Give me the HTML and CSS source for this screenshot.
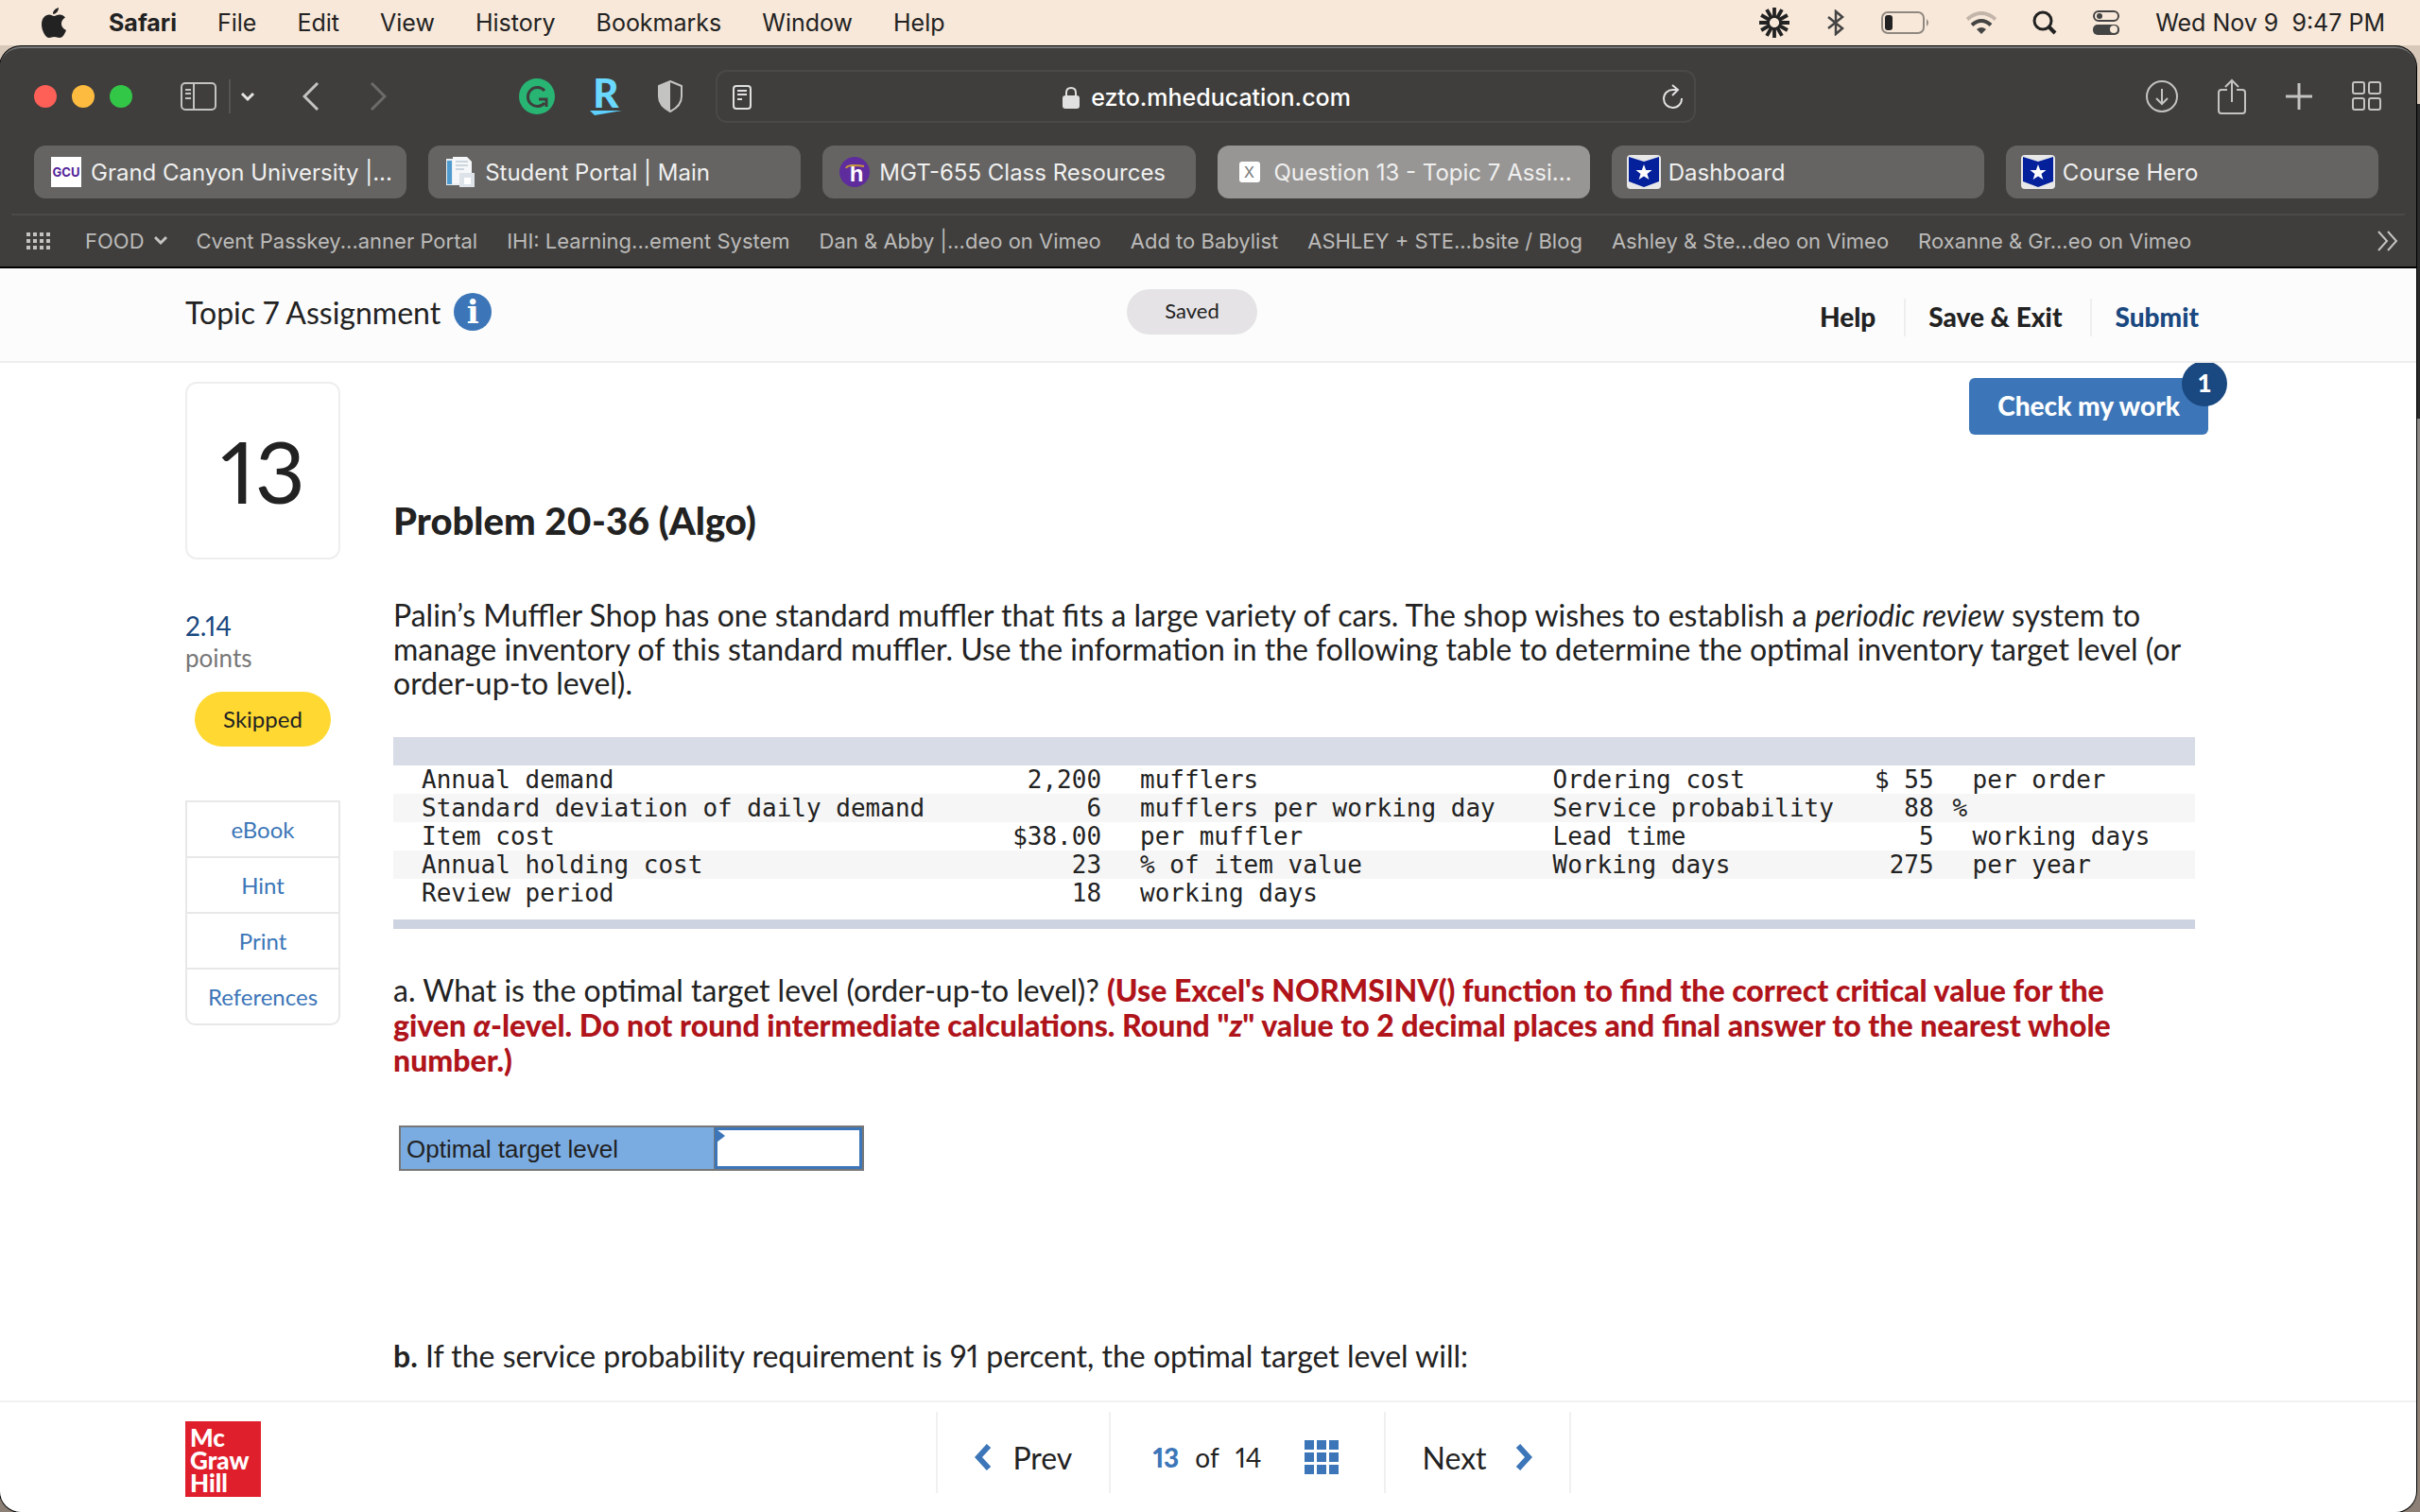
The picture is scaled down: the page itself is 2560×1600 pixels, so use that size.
FILE: index.html
```html
<!DOCTYPE html>
<html lang="en">
<head>
  <meta charset="UTF-8">
  <title>Question 13 - Topic 7 Assignment</title>
  <link rel="stylesheet" href="styles.css">
</head>
<body>
  <header class="menubar">
    <svg class="apple" width="28" height="32" viewBox="0 0 28 32"><path d="M19 0c0 4-3 7-6 7 0-4 3-6 6-7zM14 9c2 0 3-1.500 6-1.500 3 0 5 1.500 6 3-6 3.500-5 11 1 13.500-2 5-4 8-7 8-2 0-3-1-5.500-1S11 32 9 32C5 32 1 24 1 18 1 11 5 7.500 9 7.500c2 0 4 1.500 5 1.500z" fill="#222"/></svg>
    <nav class="menus">
      <b>Safari</b><span>File</span><span>Edit</span><span>View</span><span>History</span><span>Bookmarks</span><span>Window</span><span>Help</span>
    </nav>
    <div class="status">
      <svg width="34" height="34" viewBox="-17 -17 34 34"><path d="M0-16V-5M0 5V16M-16 0H-5M5 0H16M4.300 2.500L13.900 8M-4.300 2.500L-13.900 8M4.300-2.500L13.900-8M-4.300-2.500L-13.900-8M2.500 4.300L8 13.900M-2.500 4.300L-8 13.900M2.500-4.300L8-13.900M-2.500-4.300L-8-13.900" stroke="#222" stroke-width="3.800"/></svg>
      <svg width="20" height="28" viewBox="0 0 20 28"><path d="M2 8l15 12-7 6V2l7 6L2 20" fill="none" stroke="#444" stroke-width="2.500"/></svg>
      <svg width="52" height="26" viewBox="0 0 52 26"><rect x="1" y="2" width="44" height="22" rx="6" fill="none" stroke="#8f8880" stroke-width="2"/><rect x="4" y="5" width="8" height="16" rx="3" fill="#222"/><path d="M48 9q4 4 0 8z" fill="#8f8880"/></svg>
      <svg width="32" height="24" viewBox="0 0 32 24"><g fill="none" stroke-width="4"><path d="M1 8.500q15-13 30 0" stroke="#c3b5aa"/><path d="M6 14.500q10-9 20 0" stroke="#444"/></g><path d="M11 19q5-4 10 0l-5 5z" fill="#444"/></svg>
      <svg width="26" height="26" viewBox="0 0 26 26"><g fill="none" stroke="#222" stroke-width="3"><circle cx="11" cy="11" r="9"/><path d="M17 17l7 7" stroke-width="4"/></g></svg>
      <svg width="28" height="28" viewBox="0 0 28 28"><rect x="1" y="2" width="26" height="10" rx="5" fill="none" stroke="#444" stroke-width="2"/><circle cx="7" cy="7" r="3" fill="#444"/><rect y="16" width="28" height="11" rx="5" fill="#444"/><circle cx="22" cy="21" r="4" fill="#f8e8d9"/></svg>
      <time>Wed Nov 9&nbsp; 9:47 PM</time>
    </div>
  </header>

  <div class="window">
    <div class="toolbar">
      <div class="lights"><i class="red"></i><i class="yellow"></i><i class="green"></i></div>
      <button class="sidebar-btn" aria-label="Sidebar"><svg width="38" height="30" viewBox="0 0 38 30"><g fill="none" stroke="#c3c3c2" stroke-width="2"><rect x="1" y="1" width="36" height="28" rx="4"/><path d="M14 1v28M5 8h6M5 12h6M5 17h6"/></g></svg></button>
      <button class="drop-btn" aria-label="Tab groups"><svg width="16" height="12" viewBox="0 0 16 12"><path d="M2 3l6 6 6-6" fill="none" stroke="#e5e5e5" stroke-width="3"/></svg></button>
      <button class="back-btn" aria-label="Back"><svg width="18" height="30" viewBox="0 0 18 30"><path d="M16 1L2 15l14 14" fill="none" stroke="#c3c3c2" stroke-width="3"/></svg></button>
      <button class="fwd-btn" aria-label="Forward"><svg width="18" height="30" viewBox="0 0 18 30"><path d="M2 1l14 14L2 29" fill="none" stroke="#6b6b69" stroke-width="3"/></svg></button>
      <div class="extensions">
        <svg width="38" height="38" viewBox="0 0 38 38"><circle cx="19" cy="19" r="19" fill="#28b574"/><path d="M27 13a10 10 0 1 0 0 13M21 22h8v8" fill="none" stroke="#3f3e3c" stroke-width="3"/></svg>
        <span class="rakuten">R<svg width="34" height="5" viewBox="0 0 34 5"><path d="M0 0h34L5 5z" fill="#5ed0ff"/></svg></span>
        <svg width="28" height="34" viewBox="0 0 28 34"><path d="M14 1l12 5v11q0 10-12 16Q2 27 2 17V6z" fill="none" stroke="#c3c3c2" stroke-width="2"/><path d="M14 1v32Q2 27 2 17V6z" fill="#c3c3c2"/></svg>
      </div>
      <div class="address">
        <svg width="20" height="26" viewBox="0 0 20 26"><g fill="none" stroke="#e0e0e0" stroke-width="2"><rect x="1" y="1" width="18" height="24" rx="3"/><path d="M5 6h10M5 10h10M5 15h5"/></g></svg>
        <span class="url"><svg width="18" height="24" viewBox="0 0 18 24"><rect y="10" width="18" height="14" rx="3" fill="#e0e0e0"/><path d="M4 11V7q0-5 5-5t5 5v4" fill="none" stroke="#e0e0e0" stroke-width="2"/></svg>ezto.mheducation.com</span>
        <svg width="24" height="28" viewBox="0 0 24 28"><path d="M21 15a9.500 9.500 0 1 1-9-9h4M11 1l6 5-6 6" fill="none" stroke="#e0e0e0" stroke-width="2"/></svg>
      </div>
      <div class="actions">
        <svg width="34" height="34" viewBox="0 0 34 34"><g fill="none" stroke="#c3c3c2" stroke-width="2"><circle cx="17" cy="17" r="16"/><path d="M17 9v16M11 19l6 6 6-6"/></g></svg>
        <svg width="30" height="38" viewBox="0 0 30 38"><g fill="none" stroke="#c3c3c2" stroke-width="2"><path d="M10 12H4q-3 0-3 3v19q0 3 3 3h22q3 0 3-3V15q0-3-3-3h-6M15 25V2M8 9l7-7 7 7"/></g></svg>
        <svg width="28" height="28" viewBox="0 0 28 28"><path d="M14 0v28M0 14h28" stroke="#c3c3c2" stroke-width="3"/></svg>
        <svg width="32" height="32" viewBox="0 0 32 32"><g fill="none" stroke="#c3c3c2" stroke-width="2"><rect x="1" y="1" width="12" height="12" rx="2"/><rect x="18" y="1" width="12" height="12" rx="2"/><rect x="1" y="18" width="12" height="12" rx="2"/><rect x="18" y="18" width="12" height="12" rx="2"/></g></svg>
      </div>
    </div>

    <div class="tabs">
      <div class="tab"><span class="fav gcu">GCU</span>Grand Canyon University |...</div>
      <div class="tab"><svg class="fav" width="32" height="32" viewBox="0 0 32 32"><path d="M1 2h16v28H1z" fill="#e9eef2"/><path d="M2 4h5v25H2z" fill="#4f9bd0"/><path d="M8 0h15l5 5v23H8z" fill="#f5f7f9"/><path d="M11 5h13M11 9h13M11 13h9" stroke="#ccd6de" stroke-width="2"/><path d="M15 17h16v15H15z" fill="#dde3e9"/><path d="M20 22h7v7h-7z" fill="#fff"/></svg>Student Portal | Main</div>
      <div class="tab"><svg class="fav" width="32" height="32" viewBox="0 0 32 32"><circle cx="16" cy="16" r="16" fill="#5f2c9d"/><text class="halo" x="18" y="26" text-anchor="middle">h</text><path d="M7 12q1-3 8-3t11 1" fill="none" stroke="#c9973a" stroke-width="2"/></svg>MGT-655 Class Resources</div>
      <div class="tab active"><span class="fav cross"><i>X</i></span>Question 13 - Topic 7 Assi...</div>
      <div class="tab"><svg class="fav hero" width="36" height="36" viewBox="0 0 36 36"><rect width="36" height="36" rx="4" fill="#e8e8e8"/><path d="M2 2l16 5 16-5v26l-16 6-16-6z" fill="#04209b"/><path d="M18 10l2.200 6h6.300l-5 4 1.900 6-5.400-3.600-5.400 3.600 1.900-6-5-4h6.300z" fill="#fff"/></svg>Dashboard</div>
      <div class="tab"><svg class="fav hero" width="36" height="36" viewBox="0 0 36 36"><rect width="36" height="36" rx="4" fill="#e8e8e8"/><path d="M2 2l16 5 16-5v26l-16 6-16-6z" fill="#04209b"/><path d="M18 10l2.200 6h6.300l-5 4 1.900 6-5.400-3.600-5.400 3.600 1.900-6-5-4h6.300z" fill="#fff"/></svg>Course Hero</div>
    </div>

    <nav class="bookmarks">
      <svg width="26" height="18" viewBox="0 0 26 18"><path d="M0 2h26M0 9h26M0 16h26" stroke="#c3c3c2" stroke-width="4" stroke-dasharray="4 3"/></svg>
      <span class="food">FOOD <svg width="14" height="12" viewBox="0 0 14 12"><path d="M1 2l6 6 6-6" fill="none" stroke="#c3c3c2" stroke-width="3"/></svg></span>
      <span>Cvent Passkey...anner Portal</span>
      <span>IHI: Learning...ement System</span>
      <span>Dan &amp; Abby |...deo on Vimeo</span>
      <span>Add to Babylist</span>
      <span>ASHLEY + STE...bsite / Blog</span>
      <span>Ashley &amp; Ste...deo on Vimeo</span>
      <span>Roxanne &amp; Gr...eo on Vimeo</span>
      <svg class="more" width="24" height="22" viewBox="0 0 24 22"><path d="M2 1l9 10-9 10M12 1l9 10-9 10" fill="none" stroke="#c3c3c2" stroke-width="2"/></svg>
    </nav>

    <div class="page">
      <div class="page-header">
        <div class="container header-row">
          <div class="title">Topic 7 Assignment <button class="info" aria-label="Information">i</button></div>
          <div class="saved">Saved</div>
          <nav class="header-links"><a href="#">Help</a><a href="#">Save &amp; Exit</a><a class="submit" href="#">Submit</a></nav>
        </div>
      </div>

      <div class="container content">
        <aside class="side">
          <div class="number">13</div>
          <div class="score">2.14</div>
          <div class="points">points</div>
          <div class="skipped">Skipped</div>
          <nav class="side-links">
            <a href="#">eBook</a>
            <a href="#">Hint</a>
            <a href="#">Print</a>
            <a href="#">References</a>
          </nav>
        </aside>

        <main class="question">
          <div class="check-row">
            <button class="check">Check my work<span class="badge">1</span></button>
          </div>
          <h1>Problem 20-36 (Algo)</h1>
          <p class="intro">Palin’s Muffler Shop has one standard muffler that fits a large variety of cars. The shop wishes to establish a <em>periodic review</em> system to<br>manage inventory of this standard muffler. Use the information in the following table to determine the optimal inventory target level (or<br>order-up-to level).</p>

          <table class="data">
            <colgroup><col class="c-item"><col class="c-value"><col class="c-unit"><col class="c-item2"><col class="c-value2"><col></colgroup>
            <thead><tr><th colspan="6"></th></tr></thead>
            <tbody>
              <tr><td>Annual demand</td><td class="num">2,200</td><td>mufflers</td><td>Ordering cost</td><td class="num">$ 55</td><td>per order</td></tr>
              <tr><td>Standard deviation of daily demand</td><td class="num">6</td><td>mufflers per working day</td><td>Service probability</td><td class="num">88</td><td class="percent">%</td></tr>
              <tr><td>Item cost</td><td class="num">$38.00</td><td>per muffler</td><td>Lead time</td><td class="num">5</td><td>working days</td></tr>
              <tr><td>Annual holding cost</td><td class="num">23</td><td>% of item value</td><td>Working days</td><td class="num">275</td><td>per year</td></tr>
              <tr><td>Review period</td><td class="num">18</td><td>working days</td><td></td><td></td><td></td></tr>
            </tbody>
          </table>

          <p class="part-a">a. What is the optimal target level (order-up-to level)? <strong>(Use Excel's NORMSINV() function to find the correct critical value for the<br>given <em>α</em>-level. Do not round intermediate calculations. Round "<em>z</em>" value to 2 decimal places and final answer to the nearest whole<br>number.)</strong></p>

          <div class="answer">
            <label for="target">Optimal target level</label>
            <div class="answer-cell"><input id="target" type="text"></div>
          </div>

          <p class="part-b"><b>b.</b> If the service probability requirement is 91 percent, the optimal target level will:</p>
        </main>
      </div>

      <footer class="page-footer">
        <div class="container footer-row">
          <div class="logo">Mc<br>Graw<br>Hill</div>
          <nav class="pager">
            <a class="prev" href="#"><svg width="18" height="28" viewBox="0 0 18 28"><path d="M15 2L4 14l11 12" fill="none" stroke="#3c76b8" stroke-width="6"/></svg>Prev</a>
            <div class="count"><b>13</b><span>of</span><span>14</span><svg width="36" height="36" viewBox="0 0 36 36"><path d="M0 5h36M0 18h36M0 31h36" stroke="#3c76b8" stroke-width="10" stroke-dasharray="10 3"/></svg></div>
            <a class="next" href="#">Next<svg width="18" height="28" viewBox="0 0 18 28"><path d="M3 2l11 12L3 26" fill="none" stroke="#3c76b8" stroke-width="6"/></svg></a>
          </nav>
        </div>
      </footer>
    </div>
  </div>
</body>
</html>
```

FILE: styles.css
```css
* {
  box-sizing: border-box;
}
body {
  margin: 0;
  height: 100vh;
  display: flex;
  flex-direction: column;
  overflow: hidden;
  background: linear-gradient(#d8c8ba 110px, #2a2a2a 110px, #2a2a2a 443px, #8d8a88 443px, #8d8076);
  font-family: Inter, "Liberation Sans", sans-serif;
}
svg {
  flex: none;
}
button {
  border: 0;
  padding: 0;
  background: none;
  font-family: inherit;
  display: flex;
}
a {
  color: inherit;
  text-decoration: none;
}

/* menu bar */
.menubar {
  height: 48px;
  flex: none;
  display: flex;
  align-items: center;
  padding: 0 37px 0 43px;
  background: #f8e8d9;
  color: #222;
  font-size: 25px;
}
.menus {
  display: flex;
  gap: 43px;
  margin-left: 44px;
}
.status {
  display: flex;
  align-items: center;
  gap: 38px;
  margin-left: auto;
}

/* browser window */
.window {
  flex: 1;
  min-height: 0;
  display: flex;
  flex-direction: column;
  margin: 1px 4px 0 0;
  border-top: 2px solid #777;
  border-radius: 22px;
  overflow: hidden;
  background: #3f3e3c;
  box-shadow: 0 0 0 1px #000;
}
.toolbar {
  height: 101px;
  flex: none;
  display: flex;
  align-items: center;
  padding: 0 36px;
}
.lights {
  display: flex;
  gap: 16px;
}
.lights i {
  width: 24px;
  height: 24px;
  border-radius: 50%;
}
.red {
  background: #fe5f57;
}
.yellow {
  background: #fdbc40;
}
.green {
  background: #33c748;
}
.sidebar-btn {
  margin-left: 51px;
}
.drop-btn {
  height: 36px;
  align-items: center;
  margin-left: 13px;
  padding-left: 10px;
  border-left: 2px solid #555452;
}
.back-btn {
  margin-left: 50px;
}
.fwd-btn {
  margin-left: 53px;
}
.extensions {
  display: flex;
  align-items: center;
  gap: 37px;
  margin-left: 140px;
}
.rakuten {
  width: 34px;
  display: flex;
  flex-direction: column;
  align-items: center;
  gap: 3px;
  color: #6bd8ff;
  font: 900 42px/32px Lato, sans-serif;
}
.address {
  flex: 1;
  height: 56px;
  display: flex;
  align-items: center;
  justify-content: space-between;
  margin-left: 34px;
  padding: 2px 10px 0 16px;
  border: 2px solid #4a4947;
  border-radius: 12px;
  color: #fff;
  font-size: 25px;
  font-weight: 500;
}
.url {
  display: flex;
  align-items: center;
  gap: 12px;
}
.actions {
  display: flex;
  align-items: center;
  gap: 42px;
  margin-left: 476px;
}
.tabs {
  display: flex;
  gap: 23px;
  padding: 2px 40px 16px 36px;
}
.tab {
  flex: 1;
  min-width: 0;
  height: 56px;
  display: flex;
  align-items: center;
  gap: 10px;
  padding-left: 18px;
  border-radius: 12px;
  background: #656462;
  color: #f0f0f0;
  font-size: 24px;
  white-space: nowrap;
}
.active {
  background: #989694;
}
.fav {
  width: 32px;
  height: 32px;
  flex: none;
}
.hero {
  width: 36px;
  height: 36px;
  margin: 0 -2px;
}
.gcu {
  background: #fff;
  color: #522398;
  text-align: center;
  font: bold 13px/32px Inter, sans-serif;
}
.halo {
  fill: #fff;
  font: bold 24px "Liberation Sans", sans-serif;
}
.cross {
  display: grid;
  place-items: center;
}
.cross i {
  width: 22px;
  height: 22px;
  border-radius: 3px;
  background: #fff;
  color: #777;
  text-align: center;
  font: 16px/22px Inter, sans-serif;
}
.bookmarks {
  height: 56px;
  flex: none;
  display: flex;
  align-items: center;
  gap: 31px;
  margin: 0 12px;
  padding: 0 6px 0 16px;
  border-top: 2px solid #4b4a48;
  color: #bcbbba;
  font-size: 22px;
  white-space: nowrap;
}
.food {
  display: flex;
  align-items: center;
  gap: 10px;
  margin-left: 5px;
}
.more {
  margin-left: auto;
}

/* assignment page */
.page {
  flex: 1;
  min-height: 0;
  display: flex;
  flex-direction: column;
  border-top: 2px solid #000;
  background: #fff;
  color: #222;
  font-family: Lato, sans-serif;
  font-size: 32px;
  font-variant-numeric: proportional-nums;
}
.container {
  width: 100%;
  max-width: 2164px;
  margin: 0 auto;
}
.page-header {
  flex: none;
  border-bottom: 2px solid #eee;
  background: #fcfcfc;
}
.header-row {
  height: 98px;
  display: grid;
  grid-template-columns: 1fr auto 1fr;
  padding-right: 34px;
}
.title {
  display: flex;
  align-items: center;
  gap: 14px;
  height: 92px;
}
.info {
  width: 40px;
  height: 40px;
  justify-content: center;
  border-radius: 50%;
  background: #3c76b8;
  color: #fff;
  font: bold 34px/40px "DejaVu Serif", serif;
}
.saved {
  height: 48px;
  margin-top: 22px;
  padding: 0 40px;
  border-radius: 24px;
  background: #e5e3e6;
  font-size: 22px;
  line-height: 46px;
}
.header-links {
  display: flex;
  justify-content: flex-end;
  margin-top: 32px;
  font-size: 28px;
  font-weight: 900;
  line-height: 38px;
}
.header-links a {
  height: 40px;
  padding: 0 30px 0 24px;
}
.header-links a + a {
  border-left: 2px solid #eee;
}
.header-links .submit {
  padding-right: 0;
  color: #1a4880;
}
.content {
  flex: 1;
  min-height: 0;
  display: flex;
  gap: 56px;
  overflow: hidden;
}
.side {
  width: 164px;
  flex: none;
  padding-top: 20px;
}
.number {
  height: 188px;
  border: 2px solid #eee;
  border-radius: 12px;
  text-align: center;
  font-size: 92px;
  line-height: 184px;
}
.score {
  margin-top: 52px;
  color: #1a4880;
  font-size: 28px;
  line-height: 36px;
}
.points {
  color: #777;
  font-size: 26px;
  line-height: 32px;
}
.skipped {
  height: 58px;
  margin: 20px 10px 0;
  border-radius: 29px;
  background: #ffd932;
  text-align: center;
  font-size: 24px;
  line-height: 58px;
}
.side-links {
  margin-top: 57px;
  border: 2px solid #e8e8e8;
  border-radius: 0 0 10px 10px;
}
.side-links a {
  display: block;
  color: #3c76b8;
  text-align: center;
  font-size: 24px;
  line-height: 57px;
}
.side-links a + a {
  border-top: 2px solid #e8e8e8;
}
.question {
  flex: 1;
  min-width: 0;
  padding-right: 38px;
}
.check-row {
  display: flex;
  justify-content: flex-end;
  margin: 16px -14px 0 0;
}
.check {
  position: relative;
  height: 60px;
  padding: 0 30px;
  border-radius: 6px;
  background: #3c76b8;
  color: #fff;
  font-size: 28px;
  font-weight: 900;
  line-height: 58px;
}
.badge {
  position: absolute;
  top: -18px;
  right: -20px;
  width: 48px;
  height: 48px;
  border-radius: 50%;
  background: #1a4880;
  font-size: 26px;
  line-height: 46px;
}
h1 {
  margin: 66px 0 0;
  font-size: 40px;
  font-weight: 900;
  line-height: 50px;
}
.intro {
  margin: 57px 0 0;
  line-height: 36px;
  white-space: nowrap;
}
.data {
  width: 100%;
  margin-top: 39px;
  table-layout: fixed;
  border-collapse: separate;
  border-spacing: 0;
  border-bottom: 10px solid #cdd3e0;
  padding-bottom: 13px;
  font: 26px/30px "DejaVu Sans Mono", monospace;
}
.c-item {
  width: 30%;
}
.c-value {
  width: 9.3%;
}
.c-unit {
  width: 22.9%;
}
.c-item2 {
  width: 18%;
}
.c-value2 {
  width: 5.3%;
}
.data th {
  height: 30px;
  padding: 0;
  background: #d8dce7;
}
.data td {
  height: 30px;
  padding: 0 0 0 41px;
  white-space: nowrap;
}
.data td:first-child {
  padding-left: 30px;
}
.data .num {
  padding: 0;
  text-align: right;
}
.data .percent {
  padding-left: 20px;
}
.data tbody tr:nth-child(even) {
  background: #f6f6f6;
}
.part-a {
  margin: 46px 0 0;
  line-height: 37px;
  white-space: nowrap;
}
.part-a strong {
  color: #b0141b;
  font-weight: 900;
}
.answer {
  width: 492px;
  height: 48px;
  display: flex;
  margin: 51px 0 0 6px;
  border: 2px solid #777;
  background: #7aace2;
  font: 26px/46px "Liberation Sans", sans-serif;
}
.answer label {
  width: 332px;
  padding-left: 6px;
  border-right: 1px solid #777;
}
.answer-cell {
  position: relative;
  flex: 1;
}
.answer-cell::after {
  content: "";
  position: absolute;
  top: 2px;
  left: 2px;
  border: 7px solid transparent;
  border-left: 9px solid #3c76b8;
  border-right: 0;
}
.answer input {
  display: block;
  width: 100%;
  height: 44px;
  border: 3px solid #3c76b8;
  padding: 0 8px;
  font-size: 26px;
}
.part-b {
  margin: 176px 0 0;
  line-height: 40px;
}
.page-footer {
  flex: none;
  border-top: 2px solid #f2f2f2;
}
.footer-row {
  height: 116px;
  display: grid;
  grid-template-columns: 1fr auto 1fr;
  padding-top: 10px;
}
.logo {
  width: 80px;
  height: 80px;
  margin-top: 10px;
  padding: 5px;
  background: #e01f2d;
  color: #fff;
  font-size: 26px;
  font-weight: 900;
  line-height: 24px;
}
.pager {
  display: flex;
  height: 86px;
  margin-left: 96px;
  border-left: 2px solid #f0f0f0;
}
.pager > * {
  display: flex;
  align-items: center;
  border-right: 2px solid #f0f0f0;
  padding: 10px 39px 0;
}
.pager .prev {
  gap: 22px;
}
.pager .count {
  gap: 17px;
  padding: 10px 48px 0 44px;
  font-size: 28px;
}
.count b {
  color: #3c76b8;
  font-weight: 900;
}
.count svg {
  margin-left: 28px;
}
.pager .next {
  gap: 30px;
}
```
